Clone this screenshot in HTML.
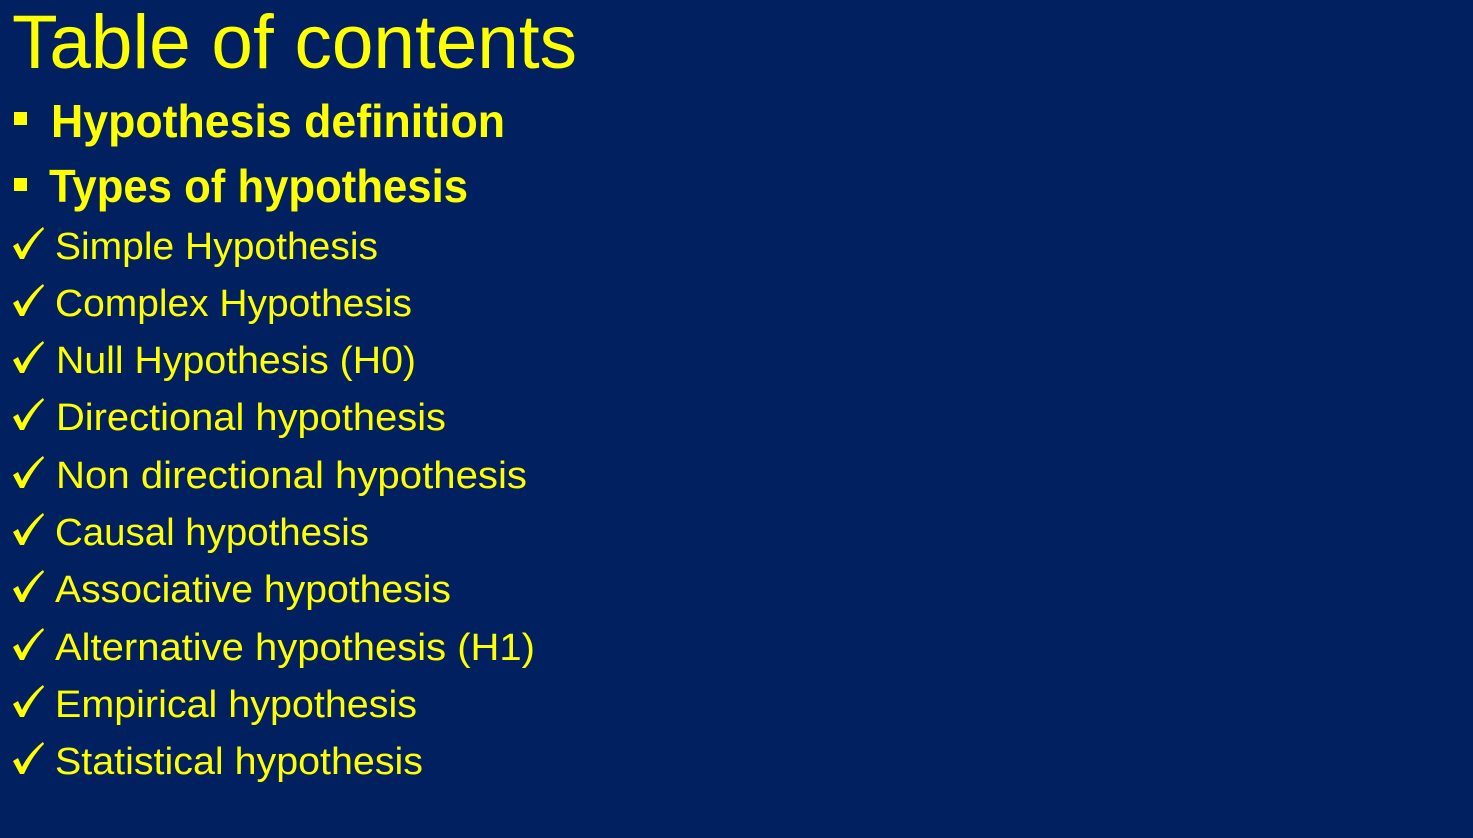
<!DOCTYPE html>
<html><head><meta charset="utf-8"><style>
html,body{margin:0;padding:0;background:#002060;}
svg{display:block;}
text{fill:#FFFF00;font-family:"Liberation Sans",sans-serif;}
</style></head><body>
<svg width="1473" height="838" viewBox="0 0 1473 838" xmlns="http://www.w3.org/2000/svg">
<rect width="1473" height="838" fill="#002060"/>
<text x="12" y="68" font-size="76" textLength="565" lengthAdjust="spacingAndGlyphs">Table of contents</text>
<rect x="14" y="112" width="13" height="13" fill="#FFFF00"/>
<text x="51" y="137" font-size="46" font-weight="bold" textLength="454" lengthAdjust="spacingAndGlyphs">Hypothesis definition</text>
<rect x="14" y="178" width="13" height="13" fill="#FFFF00"/>
<text x="49" y="202" font-size="46" font-weight="bold" textLength="419" lengthAdjust="spacingAndGlyphs">Types of hypothesis</text>
<defs>
<path id="ck" d="M0,-12 L5,-15 L9,-6 C14,-16 22,-25 30,-31 L31,-29 C23,-21 16,-10 11,1 L7,1 Z" fill="#FFFF00"/>
</defs>
<g>
<use href="#ck" x="13" y="258"/>
<text x="55" y="259" font-size="38" textLength="323" lengthAdjust="spacingAndGlyphs">Simple Hypothesis</text>
<use href="#ck" x="13" y="315"/>
<text x="55" y="316" font-size="38" textLength="357" lengthAdjust="spacingAndGlyphs">Complex Hypothesis</text>
<use href="#ck" x="13" y="372"/>
<text x="56" y="373" font-size="38" textLength="360" lengthAdjust="spacingAndGlyphs">Null Hypothesis (H0)</text>
<use href="#ck" x="13" y="429"/>
<text x="56" y="430" font-size="38" textLength="390" lengthAdjust="spacingAndGlyphs">Directional hypothesis</text>
<use href="#ck" x="13" y="487"/>
<text x="56" y="488" font-size="38" textLength="471" lengthAdjust="spacingAndGlyphs">Non directional hypothesis</text>
<use href="#ck" x="13" y="544"/>
<text x="55" y="545" font-size="38" textLength="314" lengthAdjust="spacingAndGlyphs">Causal hypothesis</text>
<use href="#ck" x="13" y="601"/>
<text x="55" y="602" font-size="38" textLength="396" lengthAdjust="spacingAndGlyphs">Associative hypothesis</text>
<use href="#ck" x="13" y="659"/>
<text x="55" y="660" font-size="38" textLength="480" lengthAdjust="spacingAndGlyphs">Alternative hypothesis (H1)</text>
<use href="#ck" x="13" y="716"/>
<text x="55" y="717" font-size="38" textLength="362" lengthAdjust="spacingAndGlyphs">Empirical hypothesis</text>
<use href="#ck" x="13" y="773"/>
<text x="55" y="774" font-size="38" textLength="368" lengthAdjust="spacingAndGlyphs">Statistical hypothesis</text>
</g>
</svg>
</body></html>
